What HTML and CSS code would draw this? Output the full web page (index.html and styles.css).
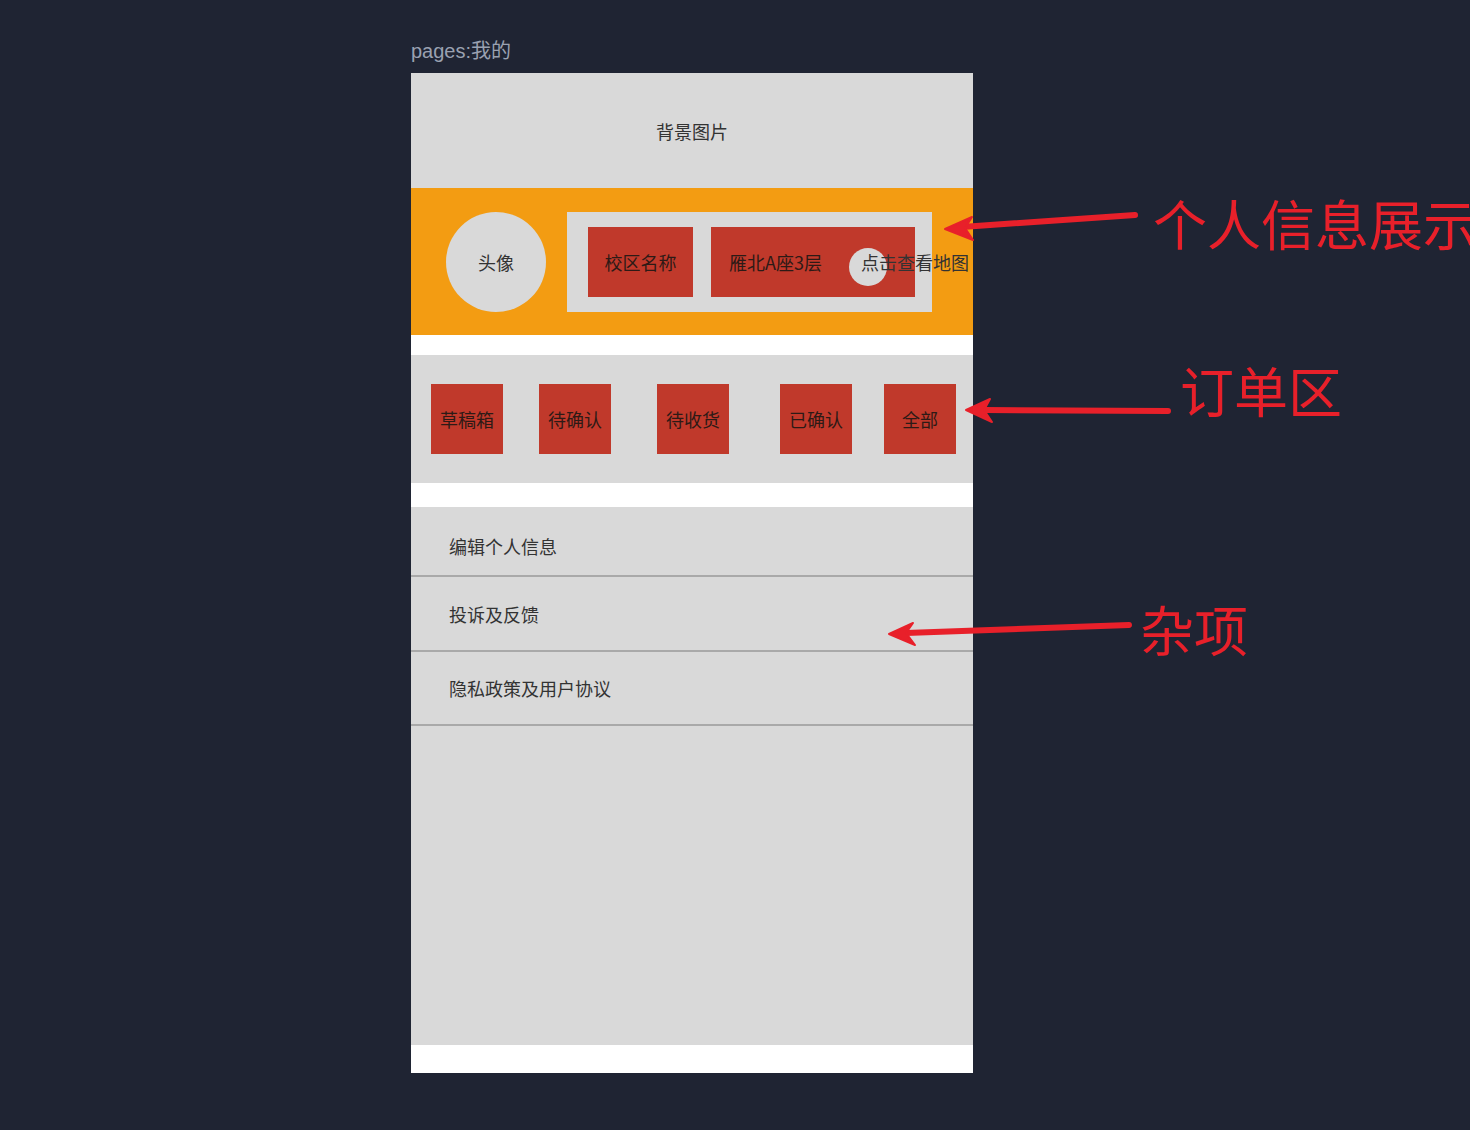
FILE: index.html
```html
<!DOCTYPE html>
<html lang="zh-CN">
<head>
<meta charset="utf-8">
<title>pages:我的</title>
<link rel="stylesheet" href="styles.css">
</head>
<body>
<div class="stage">
  <div class="page-title">pages:我的</div>
  <div class="phone">
    <div class="cover">背景图片</div>
    <div class="profile">
      <div class="avatar">头像</div>
      <div class="info">
        <div class="tag tag-campus">校区名称</div>
        <div class="tag tag-address">
          <span class="address-text">雁北A座3层</span>
          <span class="map-link"><i class="map-dot"></i><span class="map-text">点击查看地图</span></span>
        </div>
      </div>
    </div>
    <div class="spacer"></div>
    <div class="orders">
      <div class="order">草稿箱</div>
      <div class="order">待确认</div>
      <div class="order">待收货</div>
      <div class="order">已确认</div>
      <div class="order">全部</div>
    </div>
    <div class="spacer spacer-lg"></div>
    <div class="menu">
      <div class="menu-item">编辑个人信息</div>
      <div class="menu-item">投诉及反馈</div>
      <div class="menu-item menu-item-last">隐私政策及用户协议</div>
    </div>
    <div class="phone-foot"></div>
  </div>

  <svg class="arrows" width="1470" height="1130" viewBox="0 0 1470 1130">
    <g fill="#e8202a" stroke="#e8202a" stroke-linecap="round" stroke-linejoin="round">
      <line x1="1135" y1="215" x2="962" y2="227" stroke-width="6"/>
      <path d="M945 229 L972 217 L965 228 L973 240 Z" stroke-width="2"/>
      <line x1="1168" y1="411" x2="984" y2="410" stroke-width="6"/>
      <path d="M966 410 L990 399 L984 410 L992 422 Z" stroke-width="2"/>
      <line x1="1129" y1="625" x2="906" y2="633" stroke-width="6"/>
      <path d="M889 634 L913 623 L906 633 L915 645 Z" stroke-width="2"/>
    </g>
  </svg>
  <div class="note note-profile">个人信息展示</div>
  <div class="note note-orders">订单区</div>
  <div class="note note-misc">杂项</div>
</div>
</body>
</html>
```
FILE: styles.css
```css
html, body {
  margin: 0;
  padding: 0;
  background: #1f2433;
  overflow: hidden;
}

.stage {
  position: relative;
  width: 1470px;
  height: 1130px;
  overflow: hidden;
  font-family: "Noto Sans CJK SC", "Noto Sans", sans-serif;
}

.page-title {
  margin-left: 411px;
  padding-top: 40px;
  font-family: "Liberation Sans", "Noto Sans CJK SC", sans-serif;
  font-size: 20px;
  line-height: 23px;
  color: #9aa1b1;
}

.phone {
  margin-top: 10px;
  margin-left: 411px;
  width: 562px;
  height: 1000px;
  background: #ffffff;
  display: flex;
  flex-direction: column;
  color: #333333;
  font-size: 18px;
  line-height: 22px;
}

.cover {
  height: 115px;
  background: #d9d9d9;
  display: flex;
  align-items: center;
  justify-content: center;
}

.profile {
  height: 147px;
  background: #f39c12;
  display: flex;
  align-items: center;
  padding-left: 35px;
  gap: 21px;
}

.avatar {
  width: 100px;
  height: 100px;
  border-radius: 50%;
  background: #d9d9d9;
  display: flex;
  align-items: center;
  justify-content: center;
  flex-shrink: 0;
}

.info {
  width: 365px;
  height: 100px;
  box-sizing: border-box;
  padding: 15px 17px 15px 21px;
  background: #d9d9d9;
  display: flex;
  gap: 18px;
  flex-shrink: 0;
}

.tag {
  height: 70px;
  background: #c0392b;
  display: flex;
  align-items: center;
  color: #2d1a16;
  flex-shrink: 0;
}

.tag-campus {
  width: 105px;
  justify-content: center;
}

.tag-address {
  width: 204px;
  box-sizing: border-box;
  padding-left: 18px;
}

.address-text {
  white-space: nowrap;
}

.map-link {
  position: relative;
  margin-left: 39px;
  white-space: nowrap;
  flex-shrink: 0;
  color: #333333;
}

.map-dot {
  position: absolute;
  left: -12px;
  top: -3px;
  width: 38px;
  height: 38px;
  border-radius: 50%;
  background: #d9d9d9;
}

.map-text {
  position: relative;
}

.spacer {
  height: 20px;
  background: #ffffff;
}

.spacer-lg {
  height: 24px;
}

.orders {
  height: 128px;
  background: #d9d9d9;
  display: flex;
  align-items: center;
  padding-left: 20px;
}

.order {
  width: 72px;
  height: 70px;
  background: #c0392b;
  color: #2d1a16;
  display: flex;
  align-items: center;
  justify-content: center;
  flex-shrink: 0;
}

.order:nth-child(2) { margin-left: 36px; }
.order:nth-child(3) { margin-left: 46px; }
.order:nth-child(4) { margin-left: 51px; }
.order:nth-child(5) { margin-left: 32px; }

.menu {
  height: 538px;
  background: #d9d9d9;
  display: flex;
  flex-direction: column;
}

.menu-item {
  padding: 28px 38px 18px;
  border-bottom: 2px solid #a9a9a9;
  color: #333333;
}

.menu-item:nth-child(2) {
  padding-top: 26px;
  padding-bottom: 25px;
}

.menu-item-last {
  padding-top: 25px;
  padding-bottom: 25px;
}

.phone-foot {
  height: 28px;
  background: #ffffff;
}

.arrows {
  position: absolute;
  left: 0;
  top: 0;
  pointer-events: none;
}

.note {
  position: absolute;
  font-family: "Noto Sans CJK SC", sans-serif;
  font-size: 54px;
  line-height: 54px;
  color: #e8202a;
  white-space: nowrap;
}

.note-profile { left: 1153px; top: 196px; }
.note-orders { left: 1180px; top: 363px; }
.note-misc { left: 1140px; top: 602px; }
```
